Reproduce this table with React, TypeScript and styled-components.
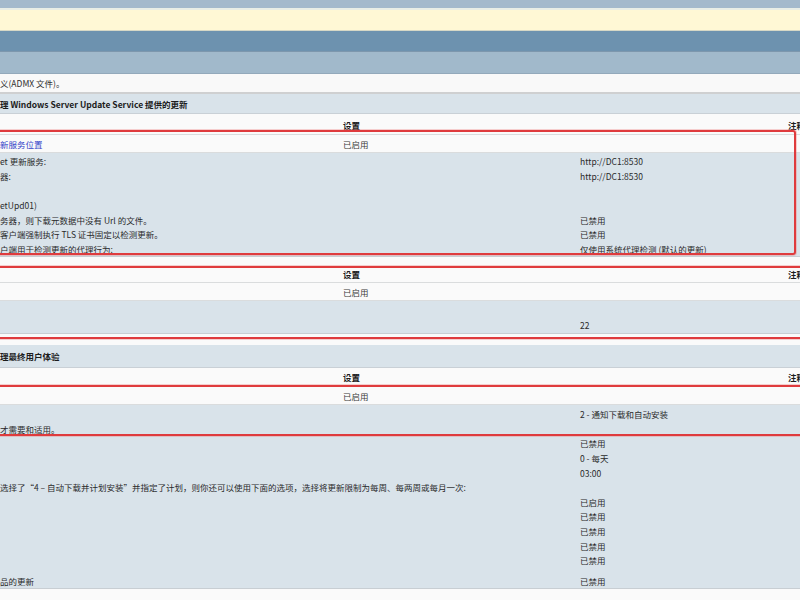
import React from "react";
import styled, { createGlobalStyle } from "styled-components";

const GlobalStyle = createGlobalStyle`
  html, body { margin: 0; padding: 0; background: #f9f9f9; overflow: hidden; }
  body {
    font-family: "Noto Sans CJK SC", "Noto Sans", sans-serif;
    font-size: 8.5px;
    color: #2e2e2e;
  }
`;

const Page = styled.div`
  position: relative;
  width: 800px;
  height: 600px;
  overflow: hidden;
  display: flex;
  flex-direction: column;
  background: #f9f9f9;
`;

const Band = styled.div<{ $bg: string; $h: number; $top?: string; $bottom?: string }>`
  flex: none;
  height: ${(p) => p.$h}px;
  background: ${(p) => p.$bg};
  border-top: ${(p) => (p.$top ? `1px solid ${p.$top}` : "none")};
  border-bottom: ${(p) => (p.$bottom ? `1px solid ${p.$bottom}` : "none")};
`;

const IntroRow = styled.div`
  flex: none;
  height: 18px;
  display: flex;
  align-items: center;
  background: #f9f9f9;
  border-bottom: 2px solid #cfd0d1;
  white-space: nowrap;
`;

const SectionHeader = styled.div<{ $h: number }>`
  flex: none;
  height: ${(p) => p.$h}px;
  display: flex;
  align-items: center;
  background: #d9e3ea;
  font-weight: 700;
  color: #1c1c1c;
  white-space: nowrap;
  border-bottom: 1px solid #c9d0d6;
`;

const Gap = styled.div<{ $h: number }>`
  flex: none;
  height: ${(p) => p.$h}px;
  background: #fafafa;
`;

const TableRow = styled.div<{ $h: number; $head?: boolean }>`
  flex: none;
  height: ${(p) => p.$h}px;
  display: grid;
  grid-template-columns: 343px 445px 1fr;
  align-items: center;
  background: #fafafa;
  font-weight: ${(p) => (p.$head ? 700 : 400)};
  color: ${(p) => (p.$head ? "#1c1c1c" : "#3a3a3a")};
  border-bottom: 1px solid #dadcdd;
  white-space: nowrap;
`;

const Cell = styled.div`
  overflow: visible;
  white-space: nowrap;
`;

const Link = styled.span`
  color: #3342c8;
`;

const Detail = styled.div<{ $h: number; $pt: number }>`
  flex: none;
  height: ${(p) => p.$h}px;
  box-sizing: border-box;
  padding-top: ${(p) => p.$pt}px;
  background: #d9e3ea;
  display: flex;
  flex-direction: column;
  border-bottom: 1px solid #c8ced3;
`;

const DetailRow = styled.div<{ $mt?: number }>`
  flex: none;
  height: 14.6px;
  margin-top: ${(p) => p.$mt ?? 0}px;
  display: grid;
  grid-template-columns: 580px 1fr;
  align-items: center;
  white-space: nowrap;
  color: #2a2a2a;
`;

const RedBox = styled.div<{ $top: number; $h: number; $w: number }>`
  position: absolute;
  left: -6px;
  top: ${(p) => p.$top}px;
  width: ${(p) => p.$w}px;
  height: ${(p) => p.$h}px;
  box-sizing: border-box;
  border: 2px solid #df3b3d;
  border-radius: 3px;
  box-shadow: 0 0 0 1px rgba(235, 120, 120, 0.35);
  pointer-events: none;
`;

type Pair = [string, string];

const block1: Pair[] = [
  ["et 更新服务:", "http://DC1:8530"],
  ["器:", "http://DC1:8530"],
  ["", ""],
  ["etUpd01)", ""],
  ["务器，则下载元数据中没有 Url 的文件。", "已禁用"],
  ["客户端强制执行 TLS 证书固定以检测更新。", "已禁用"],
  ["户端用于检测更新的代理行为:", "仅使用系统代理检测 (默认的更新)"],
];

const block2: Pair[] = [
  ["", ""],
  ["", "22"],
];

const block3: Pair[] = [
  ["", "2 - 通知下载和自动安装"],
  ["才需要和适用。", ""],
  ["", "已禁用"],
  ["", "0 - 每天"],
  ["", "03:00"],
  [
    "选择了\u201c4 – 自动下载并计划安装\u201d并指定了计划，则你还可以使用下面的选项，选择将更新限制为每周、每两周或每月一次:",
    "",
  ],
  ["", "已启用"],
  ["", "已禁用"],
  ["", "已禁用"],
  ["", "已禁用"],
  ["", "已禁用"],
];

const Rows = ({ rows }: { rows: Pair[] }) => (
  <>
    {rows.map(([a, b], i) => (
      <DetailRow key={i}>
        <Cell>{a}</Cell>
        <Cell>{b}</Cell>
      </DetailRow>
    ))}
  </>
);

const HeadRow = ({ h }: { h: number }) => (
  <TableRow $h={h} $head>
    <Cell />
    <Cell>设置</Cell>
    <Cell>注释</Cell>
  </TableRow>
);

export default function App() {
  return (
    <>
      <GlobalStyle />
      <Page>
        <Band $bg="#a4b9cc" $h={8} />
        <Band $bg="#e9ede6" $h={2} />
        <Band $bg="#fff8d5" $h={20} $bottom="#d6d8c6" />
        <Band $bg="#6d92af" $h={20} $bottom="#7d97ad" />
        <Band $bg="#a1b9cb" $h={21} $bottom="#93a9bb" />
        <IntroRow>义(ADMX 文件)。</IntroRow>
        <SectionHeader $h={19}>理 Windows Server Update Service 提供的更新</SectionHeader>
        <Gap $h={2} />
        <HeadRow h={18} />
        <TableRow $h={17}>
          <Cell>
            <Link>新服务位置</Link>
          </Cell>
          <Cell>已启用</Cell>
          <Cell />
        </TableRow>
        <Detail $h={104} $pt={1}>
          <Rows rows={block1} />
        </Detail>
        <Gap $h={9} />
        <HeadRow h={16} />
        <TableRow $h={17}>
          <Cell />
          <Cell>已启用</Cell>
          <Cell />
        </TableRow>
        <Detail $h={33} $pt={2}>
          <Rows rows={block2} />
        </Detail>
        <Gap $h={11} />
        <SectionHeader $h={22}>理最终用户体验</SectionHeader>
        <HeadRow h={18} />
        <TableRow $h={17}>
          <Cell />
          <Cell>已启用</Cell>
          <Cell />
        </TableRow>
        <Detail $h={184} $pt={2}>
          <Rows rows={block3} />
          <DetailRow $mt={6}>
            <Cell>品的更新</Cell>
            <Cell>已禁用</Cell>
          </DetailRow>
        </Detail>
        <Gap $h={20} />
        <RedBox $top={130} $h={125} $w={802} />
        <RedBox $top={266} $h={73} $w={830} />
        <RedBox $top={385} $h={51} $w={830} />
      </Page>
    </>
  );
}
